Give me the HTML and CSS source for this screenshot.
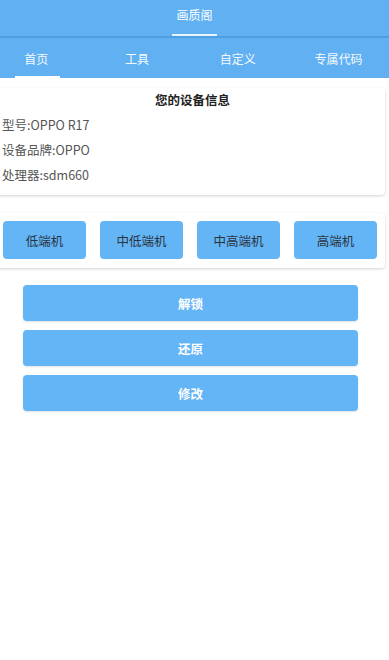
FILE: index.html
```html
<!DOCTYPE html>
<html lang="zh">
<head>
<meta charset="utf-8">
<title>画质阁</title>
<link rel="stylesheet" href="styles.css">
</head>
<body>
<header class="appbar">
  <div class="top">
    <div class="title">画质阁</div>
    <div class="title-line"></div>
  </div>
  <div class="divider"></div>
  <nav class="tabs">
    <div class="tab active"><span>首页</span><i class="ind"></i></div>
    <div class="tab"><span>工具</span></div>
    <div class="tab"><span>自定义</span></div>
    <div class="tab"><span>专属代码</span></div>
  </nav>
</header>
<main class="content">
  <section class="card info">
    <h2 class="info-title">您的设备信息</h2>
    <p class="info-row">型号:OPPO R17</p>
    <p class="info-row">设备品牌:OPPO</p>
    <p class="info-row">处理器:sdm660</p>
  </section>
  <section class="card levels">
    <button class="lvl">低端机</button>
    <button class="lvl">中低端机</button>
    <button class="lvl">中高端机</button>
    <button class="lvl">高端机</button>
  </section>
  <section class="actions">
    <button class="act">解锁</button>
    <button class="act">还原</button>
    <button class="act">修改</button>
  </section>
</main>
</body>
</html>
```
FILE: styles.css
```css
* { box-sizing: border-box; }
html, body { margin: 0; padding: 0; }
body {
  width: 389px;
  height: 660px;
  overflow: hidden;
  background: #ffffff;
  font-family: "Noto Sans CJK SC", "Noto Sans", sans-serif;
}
.appbar { background: #60b0f2; }
.top {
  height: 36px;
  display: flex;
  flex-direction: column;
  align-items: center;
}
.title {
  color: #ffffff;
  font-size: 12px;
  line-height: 14px;
  margin-top: 8px;
  height: 26px;
}
.title-line {
  width: 45px;
  height: 2px;
  background: #e6f4ff;
}
.divider { height: 2px; background: #4f9fe0; }
.tabs {
  height: 40px;
  display: flex;
  margin-left: -14px;
}
.tab {
  position: relative;
  width: 102px;
  display: flex;
  align-items: center;
  justify-content: center;
  color: #f4faff;
  font-size: 12px;
  padding-top: 0;
}
.tab .ind {
  position: absolute;
  left: 29px;
  bottom: 0;
  width: 45px;
  height: 2px;
  background: #ffffff;
}
.content { padding-top: 10px; }
.card {
  background: #ffffff;
  border-radius: 4px;
  box-shadow: 0 1px 3px rgba(0,0,0,0.18);
  margin-left: -8px;
  width: 393px;
}
.info {
  height: 107px;
  padding: 5px 0 0 10px;
}
.info-title {
  margin: 0 0 0 -2px;
  text-align: center;
  font-size: 12.5px;
  font-weight: bold;
  color: #222;
  line-height: 14px;
}
.info-row {
  margin: 10px 0 0;
  font-size: 12.5px;
  line-height: 15px;
  color: #555;
}
.info-row + .info-row { margin-top: 10px; }
.levels {
  margin-top: 18px;
  height: 55px;
  display: flex;
  gap: 14px;
  padding: 8px 0 0 11px;
}
.lvl {
  width: 83px;
  height: 38px;
  border: none;
  border-radius: 4px;
  background: #64b5f6;
  color: #2a3340;
  font-family: inherit;
  font-size: 12.5px;
  padding: 0;
}
.actions {
  margin-top: 17px;
  display: flex;
  flex-direction: column;
  gap: 9px;
  padding-left: 23px;
}
.act {
  width: 335px;
  height: 36px;
  border: none;
  border-radius: 4px;
  background: #64b5f6;
  color: #ffffff;
  font-family: inherit;
  font-weight: bold;
  font-size: 12.5px;
  padding: 0;
  box-shadow: 0 1px 2px rgba(0,0,0,0.12);
}
```
